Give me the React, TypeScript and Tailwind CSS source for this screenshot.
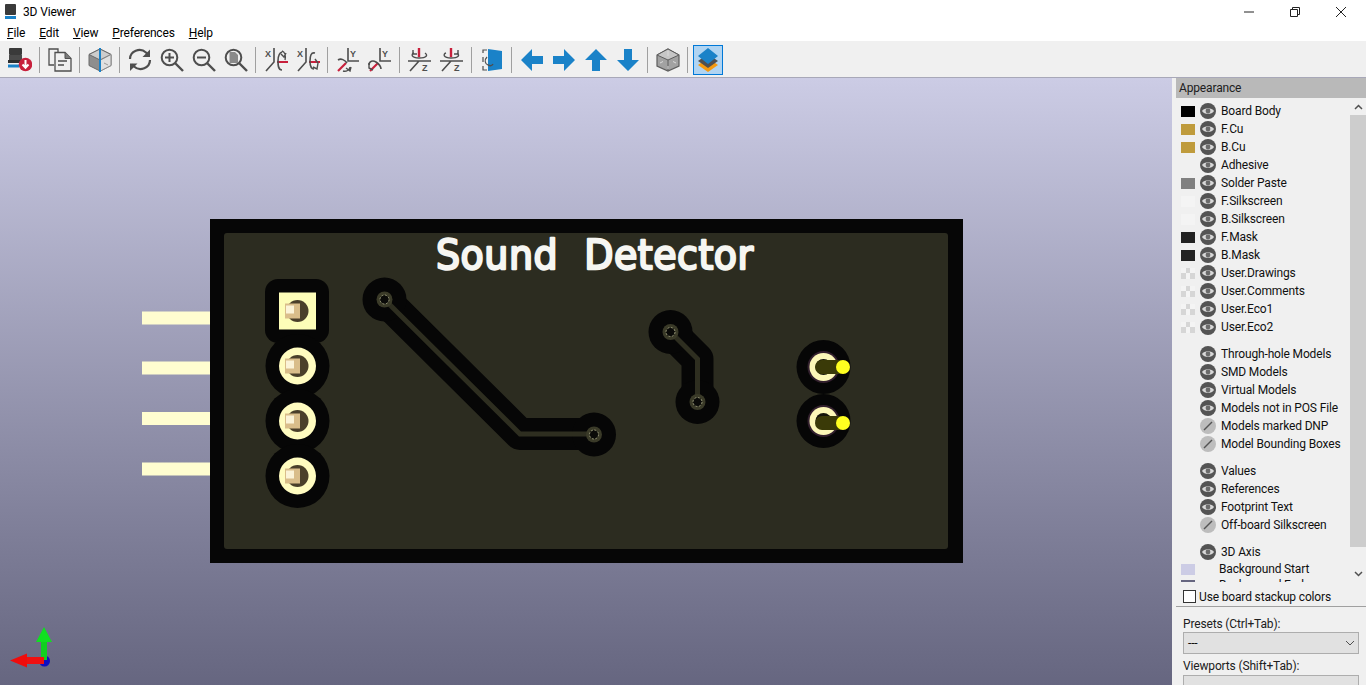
const FONT = "font-['Roboto',sans-serif] tracking-[-0.15px]";

function Sep() {
  return (
    <div className="w-2 h-[32px] flex items-center">
      <div className="ml-[3px] w-px h-[26px] bg-[#a0a0a0]" />
    </div>
  );
}

function Btn({ children, active }: { children: React.ReactNode; active?: boolean }) {
  return (
    <div
      className={
        active
          ? "mx-px w-[30px] h-[30px] flex items-center justify-center bg-[#b0d4f2] border border-[#0078d7]"
          : "w-[32px] h-[32px] flex items-center justify-center"
      }
    >
      <svg width="24" height="24" viewBox="0 0 24 24" fill="none">
        {children}
      </svg>
    </div>
  );
}

const G = "#4e4e4e";
const B = "#1a82c8";
const R = "#c8203c";

function RotateGlyph({ axis, flip }: { axis: "X" | "Y" | "Z"; flip?: boolean }) {
  if (axis === "X") {
    return (
      <>
        <text x="1" y="9" fontSize="9" fontWeight="700" fill={G} fontFamily="Liberation Sans">X</text>
        <path d="M10 0v14L2 23" stroke={G} strokeWidth="1.6" />
        <path d="M13 14h11" stroke={R} strokeWidth="2" />
        {flip ? (
          <>
            <path d="M19 5c-4-1-5 3-5 8s1 8 4 8" stroke={G} strokeWidth="1.6" />
            <path d="M19 11l3 4M22 15l-1 6-4-2" stroke={G} strokeWidth="1.4" />
          </>
        ) : (
          <>
            <path d="M18 22c-4 0-4-5-4-9s1-8 4-9" stroke={G} strokeWidth="1.6" />
            <path d="M18 3c3 1 4 5 3 9M17 6l3 3 2-4" stroke={G} strokeWidth="1.4" />
          </>
        )}
      </>
    );
  }
  if (axis === "Y") {
    return (
      <>
        <text x="14" y="9" fontSize="9" fontWeight="700" fill={G} fontFamily="Liberation Sans">Y</text>
        <path d="M12 0v13h11" stroke={G} strokeWidth="1.6" />
        <path d="M10 15L2 23" stroke={R} strokeWidth="2.2" />
        {flip ? (
          <>
            <path d="M1 17c0-4 4-5 7-3s5 5 5 7" stroke={G} strokeWidth="1.6" />
            <path d="M1 15l0 5 4 2" stroke={G} strokeWidth="1.4" />
          </>
        ) : (
          <>
            <path d="M2 12c3-2 7 0 9 3" stroke={G} strokeWidth="1.6" />
            <path d="M14 19c0 3-4 5-7 4M10 20l4 3 1-4" stroke={G} strokeWidth="1.4" />
          </>
        )}
      </>
    );
  }
  return (
    <>
      <text x="14" y="23" fontSize="9" fontWeight="700" fill={G} fontFamily="Liberation Sans">Z</text>
      <path d="M0 13h23M11 13L2 23" stroke={G} strokeWidth="1.6" />
      <path d="M11 0v9" stroke={R} strokeWidth="2.4" />
      <path d="M6 5c-3 1-3 5 5 5s9-3 6-5" stroke={G} strokeWidth="1.4" />
      <path d={flip ? "M18 2l0 4-4 0" : "M5 2l0 4 4 0"} stroke={G} strokeWidth="1.4" />
    </>
  );
}

function Toolbar() {
  return (
    <div className="h-[36px] shrink-0 bg-[#f0f0f0] flex items-center pl-1 pt-[2px]">
      <Btn>
        <rect x="1" y="0" width="13" height="7" rx="1" fill="#3a3a3a" />
        <rect x="1" y="7" width="13" height="5" fill="#4a4a4a" />
        <rect x="0" y="12" width="15" height="3" fill="#2e2e2e" />
        <rect x="0" y="16.5" width="11" height="3" fill={B} />
        <circle cx="17.5" cy="16.5" r="6.8" fill={R} />
        <path d="M17.5 12v7.5M14.5 16.5l3 3.2 3-3.2" stroke="#fff" strokeWidth="2" />
      </Btn>
      <Sep />
      <Btn>
        <path d="M10 5V1H1v16h5" stroke={G} strokeWidth="1.3" />
        <path d="M7 4.5h10l6 6v12.5H7z" stroke={G} strokeWidth="1.3" fill="#f0f0f0" />
        <path d="M17 4.5v6h6" fill="#7a7a7a" stroke={G} strokeWidth="1" />
        <path d="M10 13h9M10 17h6" stroke={G} strokeWidth="1.3" />
      </Btn>
      <Sep />
      <Btn>
        <path d="M12 1l11 5.5v11L12 23 1 17.5v-11z" fill="#8e8e8e" stroke="#6a6a6a" />
        <path d="M12 1l11 5.5L12 12 1 6.5z" fill="#cdcdcd" stroke="#6a6a6a" />
        <path d="M12.5 12L23 6.5v11L12.5 23z" fill="#e0e0e0" stroke="#8a8a8a" />
        <path d="M16 15l4 2" stroke="#9a9a9a" />
        <path d="M12 0v24" stroke={B} strokeWidth="2" />
      </Btn>
      <Sep />
      <Btn>
        <path d="M2 11a9.5 9 0 0 1 16-6.5l2 2" stroke={G} strokeWidth="2.2" />
        <path d="M22 12a9.5 9 0 0 1-16 6.5l-2-2" stroke={G} strokeWidth="2.2" />
        <path d="M22 1.5v7.5h-7.5z" fill={G} />
        <path d="M2 23v-7.5h7.5z" fill={G} />
      </Btn>
      <Btn>
        <circle cx="9.5" cy="9.5" r="7.8" stroke={G} strokeWidth="2" />
        <path d="M15 15l8 8" stroke={G} strokeWidth="2.4" />
        <path d="M9.5 5v9M5 9.5h9" stroke={G} strokeWidth="2" />
      </Btn>
      <Btn>
        <circle cx="9.5" cy="9.5" r="7.8" stroke={G} strokeWidth="2" />
        <path d="M15 15l8 8" stroke={G} strokeWidth="2.4" />
        <path d="M5 9.5h9" stroke={G} strokeWidth="2" />
      </Btn>
      <Btn>
        <circle cx="9.5" cy="9.5" r="7.8" stroke={G} strokeWidth="2" />
        <path d="M15 15l8 8" stroke={G} strokeWidth="2.4" />
        <path d="M5.5 4h5.5l3 3v8H5.5z" fill="#8a8a8a" />
      </Btn>
      <Sep />
      <Btn><RotateGlyph axis="X" /></Btn>
      <Btn><RotateGlyph axis="X" flip /></Btn>
      <Sep />
      <Btn><RotateGlyph axis="Y" /></Btn>
      <Btn><RotateGlyph axis="Y" flip /></Btn>
      <Sep />
      <Btn><RotateGlyph axis="Z" /></Btn>
      <Btn><RotateGlyph axis="Z" flip /></Btn>
      <Sep />
      <Btn>
        <path d="M7 2H3v3M3 9v5M3 18v4h4" stroke={G} strokeWidth="1.2" />
        <path d="M8 17c-3-1-4-5-1-8" stroke={G} strokeWidth="1.2" />
        <path d="M8 1l14 2v18L8 23z" fill={B} />
        <path d="M8 17c2 1 4 1 5-1" stroke={G} strokeWidth="1.4" />
      </Btn>
      <Sep />
      <Btn><path d="M1 12L12 1v7h11v8H12v7z" fill={B} /></Btn>
      <Btn><path d="M23 12L12 1v7H1v8h11v7z" fill={B} /></Btn>
      <Btn><path d="M12 1L1 12h7v11h8V12h7z" fill={B} /></Btn>
      <Btn><path d="M12 23L1 12h7V1h8v11h7z" fill={B} /></Btn>
      <Sep />
      <Btn>
        <path d="M12 1l11 6v11l-11 5-11-5V7z" fill="#a2a2a2" stroke="#5e5e5e" strokeWidth="1.2" />
        <path d="M12 1l11 6-11 5-11-5z" fill="#c6c6c6" stroke="#5e5e5e" strokeWidth="1" />
        <path d="M12 12v11" stroke="#5e5e5e" />
        <path d="M12 3v5M12 18v3M4 15l3-1.5M20 15l-3-1.5" stroke="#dadada" />
      </Btn>
      <Sep />
      <Btn active>
        <path d="M12 10l10 7-10 7-10-7z" fill="#f59a10" />
        <path d="M12 6l10 7-10 7-10-7z" fill="#505050" />
        <path d="M12 0l10 8-10 8-10-8z" fill={B} />
      </Btn>
    </div>
  );
}

function Eye({ off }: { off?: boolean }) {
  return (
    <svg width="16" height="16" viewBox="0 0 16 16">
      <circle cx="8" cy="8" r="8" fill={off ? "#bdbdbd" : "#545454"} />
      {off ? (
        <path d="M4 12l8-8" stroke="#545454" strokeWidth="1.5" />
      ) : (
        <>
          <path d="M2 8c2-3.8 10-3.8 12 0-2 3.8-10 3.8-12 0z" fill="#d8d8d8" />
          <circle cx="8" cy="8" r="2.4" fill="#6a6a6a" />
        </>
      )}
    </svg>
  );
}

type Sw = "black" | "cu" | "none" | "paste" | "silk" | "mask" | "check";

function Swatch({ kind }: { kind: Sw }) {
  if (kind === "none") return <div className="w-[14px] h-[11px]" />;
  if (kind === "check") {
    return (
      <div className="w-[14px] h-[11px] grid grid-cols-3 grid-rows-2 bg-white">
        <div className="bg-[#f4f4f4]" />
        <div className="bg-[#d6d6d6]" />
        <div className="bg-[#f4f4f4]" />
        <div className="bg-[#d6d6d6]" />
        <div className="bg-[#f4f4f4]" />
        <div className="bg-[#d6d6d6]" />
      </div>
    );
  }
  const cls: Record<string, string> = {
    black: "w-[14px] h-[11px] bg-black",
    cu: "w-[14px] h-[11px] bg-[#bf9b3c]",
    paste: "w-[14px] h-[11px] bg-[#808080]",
    silk: "w-[14px] h-[11px] bg-[#f4f4f4]",
    mask: "w-[14px] h-[11px] bg-[#222222]",
  };
  return <div className={cls[kind]} />;
}

function Row({ sw, label, off }: { sw?: Sw; label: string; off?: boolean }) {
  return (
    <div className="h-[18px] flex items-center">
      <div className="w-[24px] pl-[5px] shrink-0">
        <Swatch kind={sw ?? "none"} />
      </div>
      <div className="w-[16px] flex shrink-0">
        <Eye off={off} />
      </div>
      <span className="text-[12px] text-[#101010] whitespace-nowrap ml-[5px]">{label}</span>
    </div>
  );
}

function Panel() {
  const layers: [Sw, string][] = [
    ["black", "Board Body"],
    ["cu", "F.Cu"],
    ["cu", "B.Cu"],
    ["none", "Adhesive"],
    ["paste", "Solder Paste"],
    ["silk", "F.Silkscreen"],
    ["silk", "B.Silkscreen"],
    ["mask", "F.Mask"],
    ["mask", "B.Mask"],
    ["check", "User.Drawings"],
    ["check", "User.Comments"],
    ["check", "User.Eco1"],
    ["check", "User.Eco2"],
  ];
  return (
    <div className="w-[194px] shrink-0 bg-[#f0f0f0] pl-1 flex flex-col h-[607px] overflow-hidden">
      <div className="h-[20px] shrink-0 bg-[#b9b9b9] text-[12px] text-[#202020] pl-[3px] flex items-center">Appearance</div>
      <div className="h-[484px] shrink-0 flex overflow-hidden">
        <div className="flex-1 pt-[4px] overflow-hidden">
          {layers.map(([sw, label]) => (
            <Row key={label} sw={sw} label={label} />
          ))}
          <div className="h-[9px]" />
          <Row label="Through-hole Models" />
          <Row label="SMD Models" />
          <Row label="Virtual Models" />
          <Row label="Models not in POS File" />
          <Row label="Models marked DNP" off />
          <Row label="Model Bounding Boxes" off />
          <div className="h-[9px]" />
          <Row label="Values" />
          <Row label="References" />
          <Row label="Footprint Text" />
          <Row label="Off-board Silkscreen" off />
          <div className="h-[9px]" />
          <Row label="3D Axis" />
          <div className="h-[16px] flex items-center">
            <div className="w-[19px] pl-[5px] shrink-0">
              <div className="w-[14px] h-[11px] bg-[#ccccE5]" />
            </div>
            <span className="text-[12px] text-[#101010] whitespace-nowrap ml-[24px]">Background Start</span>
          </div>
          <div className="h-[16px] flex items-center">
            <div className="w-[19px] pl-[5px] shrink-0">
              <div className="w-[14px] h-[11px] bg-[#666680]" />
            </div>
            <span className="text-[12px] text-[#101010] whitespace-nowrap ml-[24px]">Background End</span>
          </div>
        </div>
        <div className="w-[16px] shrink-0 flex flex-col">
          <div className="h-[17px] flex items-center justify-center">
            <svg width="9" height="6" viewBox="0 0 9 6" fill="none">
              <path d="M1 5l3.5-3.5L8 5" stroke="#505050" strokeWidth="1.5" />
            </svg>
          </div>
          <div className="flex-1 bg-[#cdcdcd]" />
          <div className="h-[35px] flex items-end justify-center pb-[5px]">
            <svg width="9" height="6" viewBox="0 0 9 6" fill="none">
              <path d="M1 1l3.5 3.5L8 1" stroke="#505050" strokeWidth="1.5" />
            </svg>
          </div>
        </div>
      </div>
      <div className="h-[25px] shrink-0 flex items-center pl-[7px] pt-[5px] border-b border-[#a0a0a0]">
        <div className="w-[13px] h-[13px] bg-white border border-[#333333]" />
        <span className="text-[12px] text-[#101010] ml-[3px]">Use board stackup colors</span>
      </div>
      <div className="pl-[7px] pr-[7px] pt-[9px] flex flex-col shrink-0">
        <span className="text-[12px] text-[#202020] leading-[16px]">Presets (Ctrl+Tab):</span>
        <div className="h-[22px] shrink-0 bg-[#e1e1e1] border border-[#adadad] flex items-center justify-between pl-1 pr-[3px] text-[12px] text-[#101010]">
          <span>---</span>
          <svg width="10" height="6" viewBox="0 0 10 6" fill="none">
            <path d="M1 1l4 4 4-4" stroke="#505050" />
          </svg>
        </div>
        <span className="mt-1 text-[12px] text-[#202020] leading-[16px]">Viewports (Shift+Tab):</span>
        <div className="mt-px h-[22px] shrink-0 bg-[#e1e1e1] border border-[#adadad]" />
      </div>
    </div>
  );
}

function Pad({ y, square }: { y: number; square?: boolean }) {
  return (
    <>
      {square ? (
        <rect x="279" y={y - 18.5} width="37" height="37" fill="#fdfdb8" />
      ) : (
        <circle cx="297.5" cy={y} r="18.5" fill="#fffcc0" />
      )}
      <circle cx="297.5" cy={y} r="11" fill="#4a3f2a" />
      <rect x="285" y={y - 7.5} width="15" height="15" fill="#d9bd8a" />
      <rect x="286" y={y - 5.5} width="8" height="8" fill="#fbf3d8" />
    </>
  );
}

function Led({ y, ty }: { y: number; ty: number }) {
  return (
    <>
      <circle cx="823.5" cy={y} r="16" fill="#33202e" />
      <circle cx="823.5" cy={y} r="14" fill="#fcf8b8" />
      <circle cx="823.5" cy={y} r="8" fill="#14140a" />
      <path d={`M822 ${ty}H840`} stroke="#3a3a08" strokeWidth="14" strokeLinecap="round" />
      <circle cx="843" cy={ty} r="7" fill="#ffff20" />
    </>
  );
}

function Via({ x, y }: { x: number; y: number }) {
  return (
    <>
      <circle cx={x} cy={y} r="8" fill="#3a3a28" />
      <circle cx={x} cy={y} r="4.5" fill="#0a0a08" stroke="#c8c8a0" strokeWidth="0.7" strokeDasharray="2 1.5" />
    </>
  );
}

function Board() {
  return (
    <svg width="1172" height="607" viewBox="0 78 1172 607" className="block absolute inset-0">
      {/* header pins */}
      {[311.5, 361.5, 412, 462.5].map((y) => (
        <rect key={y} x="142" y={y} width="68" height="13" fill="#fffdd0" />
      ))}
      <rect x="210" y="219" width="753" height="344" fill="#060606" />
      <rect x="224" y="233" width="724" height="316" rx="3" fill="#2c2c20" />

      {/* mask openings */}
      <rect x="265" y="279" width="64" height="64" rx="13" fill="#060606" />
      {[366, 421, 476].map((y) => (
        <circle key={y} cx="297.5" cy={y} r="32" fill="#060606" />
      ))}
      <path d="M384.5 299.5L520 434H594" stroke="#060606" strokeWidth="32" strokeLinejoin="round" fill="none" />
      <circle cx="384.5" cy="299.5" r="22" fill="#060606" />
      <circle cx="594" cy="434.5" r="22" fill="#060606" />
      <path d="M670.5 332L697.5 359V402" stroke="#060606" strokeWidth="32" strokeLinejoin="round" fill="none" />
      <circle cx="670.5" cy="332" r="22" fill="#060606" />
      <circle cx="697.5" cy="402" r="22" fill="#060606" />
      <circle cx="823.5" cy="367" r="27" fill="#060606" />
      <circle cx="823.5" cy="421" r="27" fill="#060606" />

      {/* traces */}
      <path d="M384.5 299.5L520 434H594" stroke="#2e2e20" strokeWidth="5" fill="none" />
      <path d="M670.5 332L697.5 359V402" stroke="#2e2e20" strokeWidth="5" fill="none" />
      <Via x={384.5} y={299.5} />
      <Via x={594} y={434.5} />
      <Via x={670.5} y={332} />
      <Via x={697.5} y={402} />

      <Pad y={311} square />
      <Pad y={366} />
      <Pad y={421} />
      <Pad y={476} />
      <Led y={367} ty={367} />
      <Led y={421} ty={423} />

      <text
        transform="translate(436 269) scale(1 1.08)"
        fill="#f6f6f2"
        stroke="#f6f6f2"
        strokeWidth="2.2"
        strokeLinejoin="round"
        fontSize="38"
        fontFamily="DejaVu Sans"
        letterSpacing="0.5"
        wordSpacing="13.5"
      >
        Sound Detector
      </text>

      {/* axis */}
      <circle cx="44.5" cy="661" r="5.5" fill="#1010c0" />
      <rect x="41" y="640" width="6" height="20" fill="#10d020" />
      <path d="M44 627l8 15H36z" fill="#10e020" />
      <rect x="25" y="657" width="19" height="7" fill="#f01010" />
      <path d="M10 660.5l17-7v14z" fill="#f00c0c" />
    </svg>
  );
}

export default function App() {
  return (
    <div className={`w-[1366px] h-[685px] overflow-hidden bg-white flex flex-col ${FONT}`}>
      <div className="h-[23px] flex items-center shrink-0">
        <svg width="16" height="16" viewBox="0 0 16 16" className="ml-[4px]">
          <rect x="1" y="0" width="11" height="11" rx="1" fill="#3a3a3a" />
          <rect x="1" y="12" width="11" height="3" fill={B} />
        </svg>
        <span className="ml-[3px] pt-px text-[12px] text-black">3D Viewer</span>
        <div className="ml-auto flex items-center">
          <svg width="12" height="12" viewBox="0 0 12 12" className="mr-[34px]">
            <path d="M1 6h10" stroke="#222" />
          </svg>
          <svg width="12" height="12" viewBox="0 0 12 12" className="mr-[34px]" fill="none">
            <path d="M1.5 3.5h7v7h-7zM3.5 3.5v-2h7v7h-2" stroke="#222" />
          </svg>
          <svg width="12" height="12" viewBox="0 0 12 12" className="mr-[19px]">
            <path d="M1 1l10 10M11 1L1 11" stroke="#222" />
          </svg>
        </div>
      </div>
      <div className="h-[18px] flex items-center shrink-0 text-[12px] text-black pl-[7px] pt-[2px]">
        <span className="mr-[14px]"><u>F</u>ile</span>
        <span className="mr-[14px]"><u>E</u>dit</span>
        <span className="mr-[14px]"><u>V</u>iew</span>
        <span className="mr-[14px]"><u>P</u>references</span>
        <span><u>H</u>elp</span>
      </div>
      <Toolbar />
      <div className="h-px bg-[#a8a8b8] shrink-0" />
      <div className="flex flex-1 min-h-0">
        <div className="relative flex-1 bg-gradient-to-b from-[#ccccE5] to-[#666680] overflow-hidden">
          <Board />
        </div>
        <Panel />
      </div>
    </div>
  );
}
